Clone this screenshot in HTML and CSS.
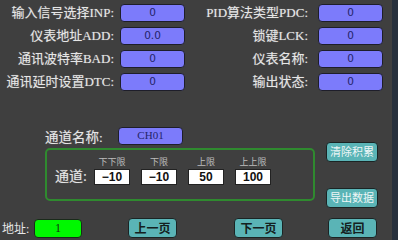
FILE: index.html
```html
<!DOCTYPE html>
<html>
<head>
<meta charset="utf-8">
<link rel="stylesheet" href="styles.css">
</head>
<body>
<div class="screen">
  <div class="main">
    <div class="params">
      <div class="lbl">输入信号选择INP:</div><div class="val">0</div>
      <div class="lbl lbl2">PID算法类型PDC:</div><div class="val">0</div>
      <div class="lbl">仪表地址ADD:</div><div class="val">0.0</div>
      <div class="lbl lbl2">锁键LCK:</div><div class="val">0</div>
      <div class="lbl">通讯波特率BAD:</div><div class="val">0</div>
      <div class="lbl lbl2">仪表名称:</div><div class="val">0</div>
      <div class="lbl">通讯延时设置DTC:</div><div class="val">0</div>
      <div class="lbl lbl2">输出状态:</div><div class="val">0</div>
    </div>
    <div class="middle">
      <div class="chan">
        <div class="name-row">
          <div class="name-lbl">通道名称:</div>
          <div class="val name-val">CH01</div>
        </div>
        <div class="group">
          <div class="group-lbl">通道:</div>
          <div class="limits">
            <div class="lim"><div class="lim-lbl">下下限</div><div class="lim-box">−10</div></div>
            <div class="lim"><div class="lim-lbl">下限</div><div class="lim-box">−10</div></div>
            <div class="lim"><div class="lim-lbl">上限</div><div class="lim-box">50</div></div>
            <div class="lim"><div class="lim-lbl">上上限</div><div class="lim-box">100</div></div>
          </div>
        </div>
      </div>
      <div class="side">
        <div class="btn btn-light">清除积累</div>
        <div class="btn btn-light">导出数据</div>
      </div>
    </div>
    <div class="bottom">
      <div class="addr-lbl">地址:</div>
      <div class="addr">1</div>
      <div class="btn btn-dark prev">上一页</div>
      <div class="btn btn-dark next">下一页</div>
      <div class="btn btn-dark back">返回</div>
    </div>
  </div>
  <div class="strip"></div>
</div>
</body>
</html>
```

FILE: styles.css
```css
* { box-sizing: border-box; }
html, body { margin: 0; padding: 0; }
body {
  width: 398px;
  height: 240px;
  overflow: hidden;
  background: #3f3f3f;
  font-family: "Liberation Serif", "Noto Sans CJK SC", serif;
}
.screen {
  display: flex;
  width: 398px;
  height: 240px;
}
.main {
  width: 392px;
  height: 240px;
  display: flex;
  flex-direction: column;
}
.strip {
  width: 6px;
  height: 240px;
  background: #27303c;
}
.params {
  display: grid;
  grid-template-columns: 117px 65px 127px 65px;
  grid-auto-rows: 18px;
  column-gap: 3px;
  row-gap: 5px;
  padding-top: 4px;
}
.lbl {
  color: #e6e6e6;
  font-size: 13px;
  line-height: 18px;
  text-align: right;
  padding-right: 3px;
  white-space: nowrap;
  text-shadow: 0 0 1px #888;
}
.lbl2 { padding-right: 7px; }
.val {
  background: #7c7bfb;
  border: 1.5px solid #1e1e2a;
  border-radius: 4px;
  color: #24246a;
  font-family: "DejaVu Sans", sans-serif;
  font-size: 10.5px;
  line-height: 15px;
  text-align: center;
}
.middle {
  display: flex;
  margin-top: 36px;
}
.chan {
  margin-left: 45px;
  width: 270px;
}
.name-row {
  display: flex;
  align-items: center;
  height: 18px;
}
.name-lbl {
  color: #e6e6e6;
  font-size: 13.5px;
  width: 73px;
  white-space: nowrap;
  text-shadow: 0 0 1px #888;
}
.name-val {
  width: 65px;
  height: 18px;
  font-family: "Liberation Serif", serif;
  font-size: 11px;
}
.group {
  margin-top: 3px;
  height: 53px;
  border: 2px solid #2f8a2f;
  border-radius: 5px;
  display: flex;
  align-items: flex-end;
  padding: 0 0 14px 8px;
}
.group-lbl {
  color: #e6e6e6;
  font-size: 14px;
  line-height: 17px;
  width: 39px;
  white-space: nowrap;
  text-shadow: 0 0 1px #888;
}
.limits {
  display: flex;
  gap: 11px;
}
.lim {
  width: 36px;
  display: flex;
  flex-direction: column;
  align-items: center;
}
.lim-lbl {
  color: #bdbdbd;
  font-size: 9px;
  line-height: 12px;
  margin-bottom: 1px;
  white-space: nowrap;
}
.lim-box {
  width: 36px;
  height: 16px;
  background: #ffffff;
  border: 1px solid #222;
  color: #111;
  font-family: "Liberation Sans", sans-serif;
  font-weight: bold;
  font-size: 12px;
  line-height: 14px;
  text-align: center;
}
.side {
  margin-left: 11px;
  padding-top: 15px;
  display: flex;
  flex-direction: column;
  gap: 26px;
}
.btn {
  width: 52px;
  height: 20px;
  background: #5ab4b6;
  border: 1.5px solid #1b2424;
  border-radius: 4px;
  text-align: center;
  white-space: nowrap;
}
.btn-light {
  color: #eef6f6;
  font-family: "Noto Sans CJK SC", sans-serif;
  font-size: 11px;
  line-height: 17px;
}
.btn-dark {
  width: 49px;
  color: #142020;
  font-family: "Noto Sans CJK SC", sans-serif;
  font-weight: bold;
  font-size: 12px;
  line-height: 17px;
}
.bottom {
  display: flex;
  align-items: center;
  margin-top: 10px;
  height: 20px;
}
.addr-lbl {
  color: #e6e6e6;
  font-size: 12px;
  margin-left: 2px;
  width: 32px;
  white-space: nowrap;
}
.addr {
  width: 48px;
  height: 19px;
  background: #00f800;
  border: 1.5px solid #1a2a1a;
  border-radius: 4px;
  color: #123012;
  font-size: 12px;
  line-height: 16px;
  text-align: center;
}
.prev { margin-left: 46px; }
.next { margin-left: 57px; }
.back { margin-left: 45px; }
```
